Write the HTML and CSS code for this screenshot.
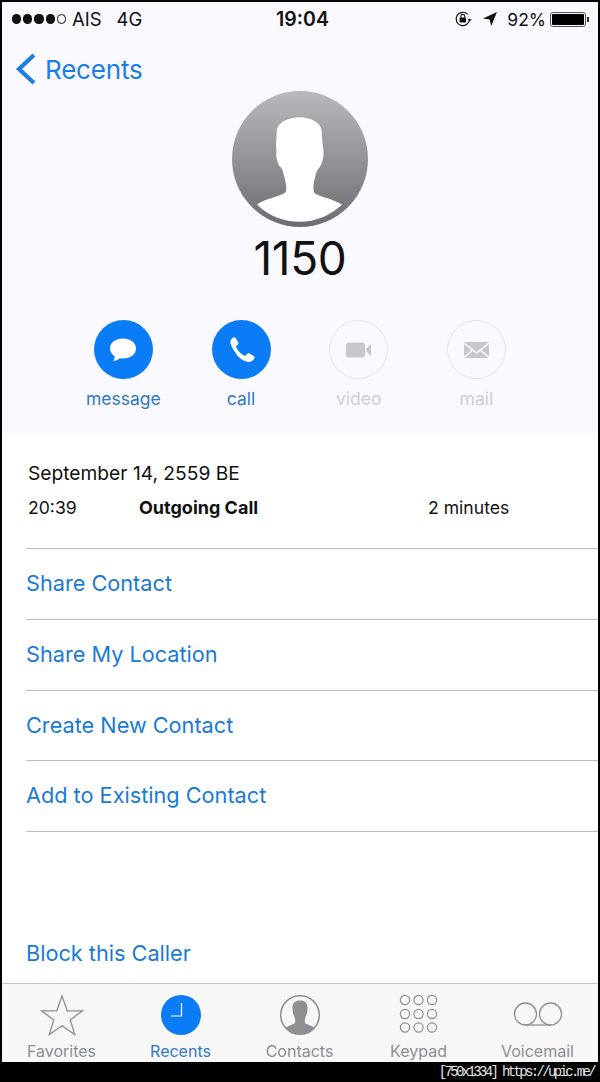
FILE: index.html
```html
<!DOCTYPE html>
<html lang="en">
<head>
<meta charset="utf-8">
<title>Recents</title>
<link rel="stylesheet" href="styles.css">
</head>
<body>
<div class="screen">
  <header class="top">
    <div class="status">
      <div class="status-left">
        <span class="signal"><i></i><i></i><i></i><i></i><i class="off"></i></span>
        <span class="carrier">AIS</span>
        <span class="net">4G</span>
      </div>
      <div class="clock">19:04</div>
      <div class="status-right">
        <svg class="ic-lock" width="20" height="18" viewBox="0 0 20 18"><path d="M15.500 9a6.700 6.700 0 1 1-1.900-4.700" fill="none" stroke="#111" stroke-width="1.200"/><path d="M13.800 9.200h4l-2 2.400z" fill="#111"/><rect x="5.600" y="7.600" width="6.400" height="5" rx=".6" fill="#111"/><path d="M6.900 7.800V6.300a1.900 1.900 0 0 1 3.800 0v1.500" fill="none" stroke="#111" stroke-width="1.100"/></svg>
        <svg class="ic-loc" width="16" height="16" viewBox="0 0 16 16"><path d="M15 1 1 7.400l6.600 1L9.200 15z" fill="#111"/></svg>
        <span class="pct">92%</span>
        <span class="battery"><span class="cell"></span></span><span class="nub"></span>
      </div>
    </div>
    <nav class="nav">
      <svg width="22" height="34" viewBox="0 0 22 34"><path d="M19 3 4 17l15 14" fill="none" stroke="#1a7ee6" stroke-width="4.200"/></svg>
      <span>Recents</span>
    </nav>
    <div class="avatar">
      <svg width="136" height="136" viewBox="65 33 410 410">
        <defs><linearGradient id="av" x1="0" y1="0" x2="0" y2="1"><stop offset="0" stop-color="#b9b9bd"/><stop offset="1" stop-color="#6c6c72"/></linearGradient></defs>
        <circle cx="270" cy="238" r="205" fill="url(#av)"/>
        <path d="M140 375C165 358 205 352 225 340C232 332 228 310 222 290C219 275 217 265 207 258C200 245 197 230 199 215C196 195 200 175 200 150C205 125 235 115 265 112C300 112 330 125 335 150C337 175 338 195 341 215C342 230 338 250 330 262C322 268 318 280 315 295C310 315 308 332 315 342C340 354 370 360 397 375C360 410 315 427 270 427C220 427 175 410 140 375Z" fill="#fff"/>
      </svg>
    </div>
    <h1 class="name">1150</h1>
    <div class="actions">
      <div class="action">
        <span class="disc on"><svg width="30" height="26" viewBox="0 0 30 26"><path d="M15 1.500c7.500 0 13 4.300 13 10s-5.500 10-13 10c-1.200 0-2.300-.1-3.400-.3-1.500 1.500-3.800 2.700-6.600 2.800 1.100-1.200 1.700-2.800 1.800-4.700C3.700 17.500 2 14.700 2 11.500c0-5.700 5.500-10 13-10z" fill="#fff"/></svg></span>
        <span class="lbl on">message</span>
      </div>
      <div class="action">
        <span class="disc on"><svg width="30" height="30" viewBox="0 0 30 30"><path d="M7 2.500c1-.6 2-.4 2.600.5l2.500 4.200c.5.900.3 1.800-.4 2.400l-1.500 1.300c-.4.300-.4.800-.2 1.200 1 2 2.200 3.700 3.600 5.100 1.400 1.400 3 2.500 5 3.500.4.200.9.100 1.200-.3l1.300-1.500c.6-.7 1.600-.9 2.400-.4l4.200 2.600c.9.600 1.100 1.600.5 2.600-1.300 2.200-3.500 3.500-6 3.200-3.800-.5-7.600-2.900-10.900-6.200C8.900 16.400 5.400 12 4.500 8.400 4 6 5 3.800 7 2.500z" fill="#fff"/></svg></span>
        <span class="lbl on">call</span>
      </div>
      <div class="action">
        <span class="disc"><svg width="28" height="18" viewBox="0 0 28 18"><rect x="1" y="1.500" width="19" height="15" rx="3" fill="#c6c6cb"/><path d="M21.500 7.500 26 3v12l-4.500-4.500z" fill="#c6c6cb"/></svg></span>
        <span class="lbl">video</span>
      </div>
      <div class="action">
        <span class="disc"><svg width="27" height="18" viewBox="0 0 27 18"><path d="M1 1h25L13.500 11zM1 3.200v12.300l7.500-6.400zM26 3.200v12.300l-7.500-6.400zM1.500 17l8.300-7 3.700 3 3.700-3 8.300 7z" fill="#c6c6cb"/></svg></span>
        <span class="lbl">mail</span>
      </div>
    </div>
  </header>
  <main class="content">
    <section class="history">
      <div class="date">September 14, 2559 BE</div>
      <div class="call">
        <span class="time">20:39</span>
        <span class="type">Outgoing Call</span>
        <span class="dur">2 minutes</span>
      </div>
    </section>
    <ul class="links">
      <li>Share Contact</li>
      <li>Share My Location</li>
      <li>Create New Contact</li>
      <li>Add to Existing Contact</li>
    </ul>
    <div class="block">Block this Caller</div>
  </main>
  <footer class="tabs">
    <div class="tab">
      <svg width="44" height="42" viewBox="0 0 44 42"><path d="M22 2l5.200 14.800H42.500L30.200 26l4.600 14.600L22 31.800 9.200 40.600 13.800 26 1.500 16.800h15.300z" fill="none" stroke="#8e8e93" stroke-width="1.300"/></svg>
      <span>Favorites</span>
    </div>
    <div class="tab on">
      <svg width="42" height="42" viewBox="0 0 42 42"><circle cx="21" cy="21" r="20" fill="#0a7cf5"/><path d="M21.500 9v13H11" fill="none" stroke="#fff" stroke-width="1.200"/></svg>
      <span>Recents</span>
    </div>
    <div class="tab">
      <svg width="42" height="42" viewBox="0 0 42 42"><defs><clipPath id="cc"><circle cx="21" cy="21" r="19"/></clipPath></defs><circle cx="21" cy="21" r="19.300" fill="#f7f7f7" stroke="#8e8e93" stroke-width="1.500"/><path clip-path="url(#cc)" d="M21 6.500c5 0 7.500 2.500 7.500 7 0 4-.5 7-2 9.500-1 3-1 5 0 6.500 3 1.500 7 2.500 10 5v8H5.500v-8c3-2.500 7-3.500 10-5 1-1.500 1-3.500 0-6.500-1.500-2.500-2-5.500-2-9.500 0-4.500 3-7 7.500-7z" fill="#8e8e93"/></svg>
      <span>Contacts</span>
    </div>
    <div class="tab">
      <svg class="pad" width="42" height="42" viewBox="0 0 42 42" fill="none" stroke="#8e8e93" stroke-width="1.200"><circle cx="6" cy="6" r="4.600"/><circle cx="19.500" cy="6" r="4.600"/><circle cx="33" cy="6" r="4.600"/><circle cx="6" cy="20" r="4.600"/><circle cx="19.500" cy="20" r="4.600"/><circle cx="33" cy="20" r="4.600"/><circle cx="6" cy="33.500" r="4.600"/><circle cx="19.500" cy="33.500" r="4.600"/><circle cx="33" cy="33.500" r="4.600"/></svg>
      <span>Keypad</span>
    </div>
    <div class="tab">
      <svg width="50" height="42" viewBox="0 0 50 42" fill="none" stroke="#8e8e93" stroke-width="1.300"><circle cx="12.500" cy="20" r="11"/><circle cx="37.500" cy="20" r="11"/><path d="M12.500 31h25"/></svg>
      <span>Voicemail</span>
    </div>
  </footer>
</div>
<div class="mark">[750x1334] https://upic.me/</div>
</body>
</html>
```
FILE: styles.css
```css
* { box-sizing: border-box; }
html, body { margin: 0; padding: 0; }
body {
  width: 600px;
  height: 1082px;
  background: #000;
  padding: 2px 2px 0;
  font-family: Inter, "Liberation Sans", sans-serif;
  overflow: hidden;
}
.screen {
  width: 596px;
  height: 1060px;
  background: #fff;
  display: flex;
  flex-direction: column;
}
.top {
  height: 431px;
  flex: none;
  background: #f9f9ff;
}
.status {
  height: 34px;
  padding: 0 0 0 10px;
  display: flex;
  align-items: center;
  font-size: 18.500px;
  color: #111;
}
.status-left { display: flex; align-items: center; flex: 1; }
.signal { display: flex; gap: 2px; margin-right: 6px; }
.signal i { width: 9.200px; height: 9.200px; border-radius: 50%; background: #111; }
.signal i.off { background: none; border: 1px solid #111; }
.net { margin-left: 15px; }
.clock { font-weight: 600; font-size: 19.500px; width: 60px; margin-left: 4px; text-align: center; }
.status-right { display: flex; align-items: center; flex: 1; justify-content: flex-end; padding-right: 9px; }
.ic-lock { margin-right: 8px; }
.ic-loc { margin-right: 9px; }
.pct { margin-right: 4px; font-size: 17.500px; }
.battery { width: 36px; height: 15px; border: 1px solid #555; border-radius: 3px; padding: 1px; display: block; }
.cell { display: block; width: 100%; height: 100%; background: #000; border-radius: 1px; }
.nub { width: 2px; height: 5px; background: #333; margin-left: 1px; }
.nav {
  height: 42px;
  margin-top: 12px;
  padding-left: 13px;
  display: flex;
  align-items: center;
  gap: 8px;
  font-size: 26px;
  color: #1a7ee6;
  letter-spacing: -.2px;
}
.avatar { height: 141px; margin-top: 1px; display: flex; justify-content: center; }
.avatar svg { display: block; }
.name {
  margin: 0;
  height: 52px;
  line-height: 52px;
  text-align: center;
  font-size: 46px;
  font-weight: 400;
  color: #111;
  letter-spacing: -.3px;
}
.actions {
  display: flex;
  padding-left: 62.500px;
  margin-top: 36px;
}
.action { width: 117.700px; display: flex; flex-direction: column; align-items: center; }
.disc {
  width: 59px;
  height: 59px;
  border-radius: 50%;
  border: 1.500px solid #e4e4e9;
  display: flex;
  align-items: center;
  justify-content: center;
}
.disc.on { background: #0a7cf5; border: none; }
.lbl { font-size: 17.500px; line-height: 20px; margin-top: 10px; color: #cfcfd4; }
.lbl.on { color: #3278c8; }
.content { flex: 1; min-height: 0; color: #111; }
.history { height: 115px; padding: 28px 0 0 26px; }
.date { font-size: 19.200px; line-height: 24px; }
.call { display: flex; font-size: 17.600px; line-height: 24px; margin-top: 11px; }
.time { width: 111px; }
.type { width: 289px; font-weight: 700; font-size: 18px; }
.links { list-style: none; margin: 0 0 0 24px; padding: 0; border-top: 1px solid #bdbdc0; }
.links li {
  height: 70.750px;
  line-height: 68px;
  border-bottom: 1px solid #bdbdc0;
  font-size: 21.700px;
  color: #1a7ad8;
}
.block { margin: 87px 0 0 24px; font-size: 21.700px; line-height: 69px; color: #1a7ad8; height: 70px; overflow: hidden; }
.tabs {
  flex: none;
  height: 79px;
  background: #f7f7f7;
  border-top: 1px solid #c4c4c6;
  display: flex;
  padding: 10px 1px 0 0;
}
.tab { flex: 1; display: flex; flex-direction: column; align-items: center; color: #8e8e93; font-size: 16px; }
.tab svg { display: block; height: 42px; }
.tab svg.pad { margin-left: 2px; }
.tab span { line-height: 20px; margin-top: 5px; }
.tab.on { color: #3278c8; }
.mark {
  text-align: right;
  padding-right: 4px;
  font-family: "Liberation Mono", monospace;
  font-size: 14px;
  letter-spacing: -2.650px;
  line-height: 20px;
  color: #e4e4e4;
  white-space: nowrap;
}
```
